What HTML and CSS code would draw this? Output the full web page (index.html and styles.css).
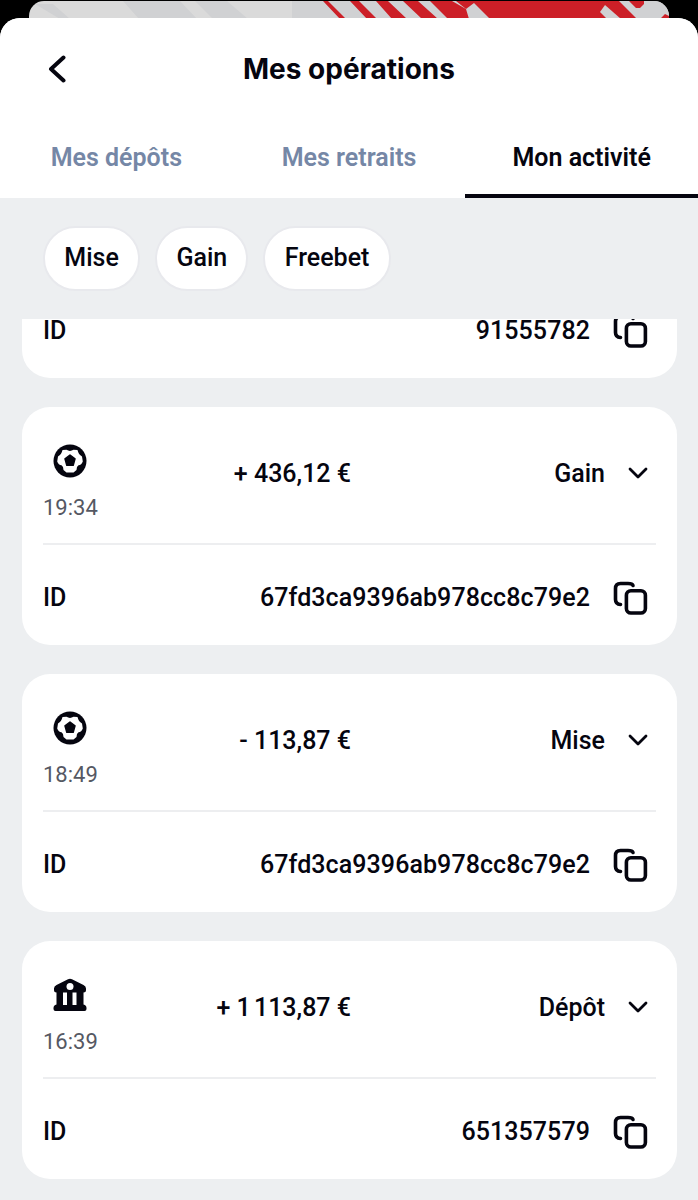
FILE: index.html
```html
<!DOCTYPE html>
<html lang="fr">
<head>
    <meta charset="UTF-8">
    <meta name="viewport" content="width=device-width, initial-scale=1.0">
    <title>Mes opérations</title>
    <link rel="stylesheet" href="styles.css">
</head>
<body>
    <!-- shared icons -->
    <svg class="sprite">
        <symbol id="icon-copy" viewBox="0 0 36 36">
            <path d="M8.500 24.500C5 24.300 3.500 23 3.500 19.500V8.500C3.500 5 5 3.500 8.500 3.500H16C19 3.500 20.500 4 21 5.500"/>
            <rect x="14.400" y="10.700" width="19" height="22.300" rx="4.500"/>
        </symbol>
        <symbol id="icon-down" viewBox="0 0 20 12">
            <path d="M2 2L10 10L18 2"/>
        </symbol>
        <symbol id="icon-ball" viewBox="0 0 34 34">
            <circle cx="17" cy="17" r="16.500" fill="#05050f"/>
            <path fill="#fff" d="M9.500 6L13.500 5.800Q17 8 20.500 5.800L24.500 6Q25.500 10.500 29 12.500L29.800 17.500Q28.500 21 25.500 21.300Q23.500 22.500 23.500 26L20.500 28.500H13.500L10.500 26Q10.500 22.500 8.500 21.300Q5.500 21 4.200 17.500L5 12.500Q8.500 10.500 9.500 6Z"/>
            <path fill="#05050f" stroke="#05050f" stroke-width="1.500" stroke-linejoin="round" d="M17 11L22 14.800L20.200 21.300H13.800L12 14.800Z"/>
        </symbol>
        <symbol id="icon-bank" viewBox="0 0 34 34">
            <path fill="#05050f" d="M15 1.200Q17 0.200 19 1.200L30.500 7Q33 8.300 33 10.500V12Q33 14.500 30.500 14.500V26.500Q33.500 27 33.500 30V31Q33.500 33 31.500 33H2.500Q0.500 33 0.500 31V30Q0.500 27 3.500 26.500V14.500Q1 14.500 1 12V10.500Q1 8.300 3.500 7Z"/>
            <circle cx="17" cy="8.500" r="3.500" fill="#fff"/>
            <path fill="#fff" d="M10 14.500H14V27H10ZM19.500 14.500H23.500V27H19.500Z"/>
        </symbol>
    </svg>

    <div class="backdrop">
        <svg class="banner" viewBox="0 0 640 36" width="640" height="36">
            <rect width="640" height="36" fill="#dadada"/>
            <path fill="#d0d1d3" d="M94 0H151L168 18H110ZM166 0H198L219 18H184ZM263 0H640V36H263ZM6 3L24 3L41 18H31Z"/>
            <path fill="#cc1f27" d="M294 0H299L317 18H311ZM321 0H330L348 18H338ZM347 0H359L378 18H363ZM374 0H389L409 18H393ZM401 0H423L437 8L440 18H419Z"/>
            <path fill="#cc1f27" d="M427 0H590L608 18H461L445 2L437 8Z"/>
            <path fill="#d0d1d3" d="M576 4L571 11L578 18H592Z"/>
            <path fill="#cc1f27" d="M600 0H615V3L611 7H607ZM636 13L631 18H640V15Z"/>
        </svg>
    </div>

    <div class="sheet">
        <header class="header">
            <svg class="back" viewBox="0 0 20 28"><path d="M16.500 2.500L4 14L16.500 25.500"/></svg>
            <h1>Mes opérations</h1>
        </header>

        <nav class="tabs">
            <a class="tab">Mes dépôts</a>
            <a class="tab">Mes retraits</a>
            <a class="tab active">Mon activité</a>
        </nav>

        <div class="filters">
            <button>Mise</button>
            <button>Gain</button>
            <button>Freebet</button>
        </div>

        <div class="list">
            <div class="card">
                <div class="card-id">
                    <span>ID</span>
                    <span class="number">91555782</span>
                    <svg class="copy"><use href="#icon-copy"/></svg>
                </div>
            </div>

            <div class="card">
                <div class="card-top">
                    <div class="when">
                        <svg class="type"><use href="#icon-ball"/></svg>
                        <span>19:34</span>
                    </div>
                    <span class="amount">+ 436,12 €</span>
                    <span class="kind">Gain</span>
                    <svg class="down"><use href="#icon-down"/></svg>
                </div>
                <div class="card-id">
                    <span>ID</span>
                    <span class="number">67fd3ca9396ab978cc8c79e2</span>
                    <svg class="copy"><use href="#icon-copy"/></svg>
                </div>
            </div>

            <div class="card">
                <div class="card-top">
                    <div class="when">
                        <svg class="type"><use href="#icon-ball"/></svg>
                        <span>18:49</span>
                    </div>
                    <span class="amount">- 113,87 €</span>
                    <span class="kind">Mise</span>
                    <svg class="down"><use href="#icon-down"/></svg>
                </div>
                <div class="card-id">
                    <span>ID</span>
                    <span class="number">67fd3ca9396ab978cc8c79e2</span>
                    <svg class="copy"><use href="#icon-copy"/></svg>
                </div>
            </div>

            <div class="card">
                <div class="card-top">
                    <div class="when">
                        <svg class="type"><use href="#icon-bank"/></svg>
                        <span>16:39</span>
                    </div>
                    <span class="amount">+ 1&#8239;113,87 €</span>
                    <span class="kind">Dépôt</span>
                    <svg class="down"><use href="#icon-down"/></svg>
                </div>
                <div class="card-id">
                    <span>ID</span>
                    <span class="number">651357579</span>
                    <svg class="copy"><use href="#icon-copy"/></svg>
                </div>
            </div>
        </div>
    </div>
</body>
</html>
```
FILE: styles.css
```css
* {
    box-sizing: border-box;
}
body {
    margin: 0;
    height: 1200px;
    overflow: hidden;
    background: #000;
    color: #05050f;
    font-family: Roboto, sans-serif;
    font-size: 25px;
    font-weight: 500;
}
svg {
    display: block;
    flex-shrink: 0;
    fill: none;
    stroke-linecap: round;
    stroke-linejoin: round;
}
.sprite {
    display: none;
}
.backdrop {
    height: 18px;
    padding: 1px 29px 0;
}
.banner {
    border-radius: 15px 15px 0 0;
}
.sheet {
    position: relative;
    display: flex;
    flex-direction: column;
    height: 1182px;
    border-radius: 20px 20px 0 0;
    background: #edeff1;
    overflow: hidden;
}
.header {
    display: grid;
    grid-template-columns: 80px 1fr 80px;
    align-items: center;
    height: 101px;
    background: #fff;
}
.back {
    width: 20px;
    height: 28px;
    margin-left: 47px;
    stroke: #05050f;
    stroke-width: 4;
}
h1 {
    margin: 0;
    padding-top: 1px;
    font-family: Inter, sans-serif;
    font-size: 28px;
    font-weight: 650;
    text-align: center;
}
.tabs {
    display: flex;
    height: 79px;
    background: #fff;
}
.tab {
    flex: 1;
    padding-top: 24px;
    border-bottom: 4px solid transparent;
    color: #7587a6;
    font-weight: 600;
    line-height: 30px;
    text-align: center;
}
.tab.active {
    border-color: #05050f;
    color: #05050f;
}
.filters {
    display: flex;
    gap: 15px;
    padding: 28px 43px;
}
.filters button {
    height: 65px;
    padding: 0 19.300px 3px;
    border: 2px solid #e8e9ed;
    border-radius: 33px;
    background: #fff;
    color: #05050f;
    font: inherit;
}
.list {
    display: flex;
    flex: 1;
    flex-direction: column;
    justify-content: flex-end;
    gap: 29px;
    min-height: 0;
    padding: 0 21px 21px 22px;
    overflow: hidden;
}
.card {
    flex-shrink: 0;
    padding: 0 21px;
    border-radius: 28px;
    background: #fff;
}
.card-top {
    display: flex;
    align-items: center;
    height: 138px;
    padding-right: 8px;
    border-bottom: 2px solid #edeef0;
}
.when {
    width: 54px;
    padding-top: 15px;
    color: #555863;
    font-size: 22px;
    font-weight: 400;
    line-height: 26px;
    text-align: center;
}
.type {
    width: 34px;
    height: 34px;
    margin: 0 auto 17px;
}
.amount {
    width: 254px;
    padding-bottom: 3px;
    text-align: right;
}
.kind {
    flex: 1;
    padding-bottom: 3px;
    text-align: right;
}
.down {
    width: 20px;
    height: 12px;
    margin: 0 0 4px 23px;
    stroke: #05050f;
    stroke-width: 2.8;
}
.card-id {
    display: flex;
    align-items: center;
    height: 100px;
    padding: 5px 8px 0 0;
}
.number {
    flex: 1;
    letter-spacing: 0.08px;
    text-align: right;
}
.copy {
    width: 36px;
    height: 36px;
    margin: 1px 0 0 22px;
    stroke: #05050f;
    stroke-width: 3.6;
}
```
